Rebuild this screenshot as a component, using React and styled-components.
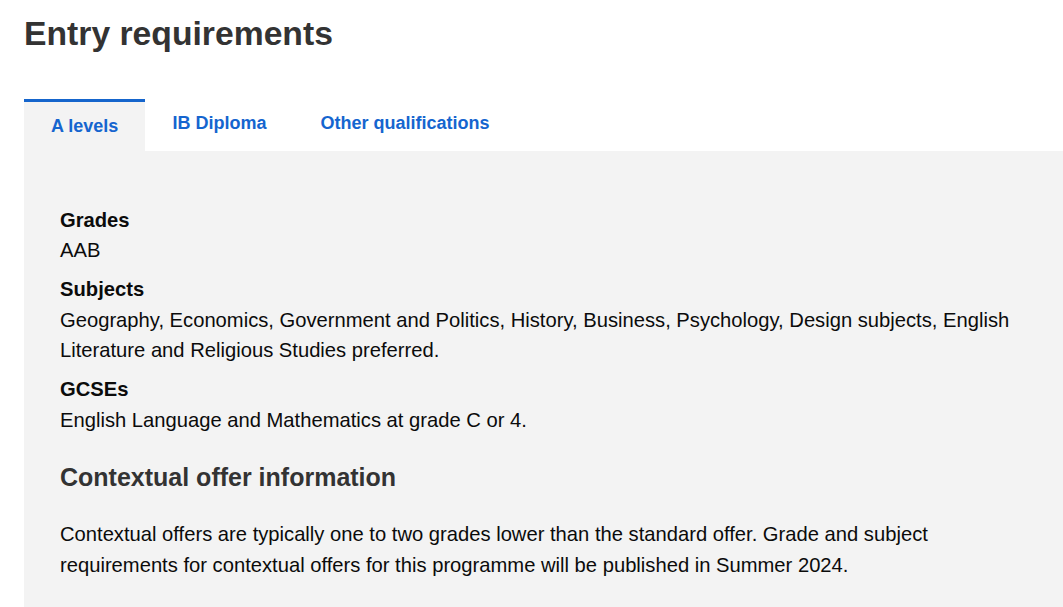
import React, { useState } from "react";
import styled, { createGlobalStyle } from "styled-components";

const GlobalStyle = createGlobalStyle`
  html, body { margin: 0; padding: 0; background: #ffffff; }
  body { font-family: "Liberation Sans", Arial, sans-serif; }
  * { box-sizing: border-box; }
`;

const Page = styled.main`
  padding: 0 0 0 24px;
  overflow: hidden;
`;

const Title = styled.h1`
  margin: 13px 0 0;
  font-size: 33.7px;
  line-height: 40.8px;
  font-weight: 700;
  color: #333333;
`;

const TabList = styled.ul`
  display: flex;
  list-style: none;
  margin: 45px 0 0;
  padding: 0;
`;

const Tab = styled.li`
  padding: ${(p) => (p.$active ? "12px 27px 13px" : "12px 27px 16px")};
  border-top: ${(p) => (p.$active ? "3px solid #1565cc" : "0")};
  background: ${(p) => (p.$active ? "#f3f3f3" : "transparent")};
`;

const TabLink = styled.a`
  display: block;
  font-size: 18px;
  line-height: 24px;
  font-weight: 700;
  color: #1565cf;
  text-decoration: none;
  cursor: pointer;
`;

const Panel = styled.section`
  background: #f3f3f3;
  padding: 54px 36px 40px;
  min-height: 460px;
`;

const Group = styled.div`
  margin-bottom: 8.5px;
`;

const Label = styled.h3`
  margin: 0;
  font-size: 20.2px;
  line-height: 30.5px;
  font-weight: 700;
  color: #0b0b0b;
`;

const Value = styled.p`
  margin: 0;
  font-size: 20.2px;
  line-height: 30.5px;
  color: #0b0b0b;
`;

const SubHeading = styled.h2`
  margin: 27px 0 27px;
  font-size: 25px;
  line-height: 30px;
  font-weight: 700;
  color: #333333;
`;

const Paragraph = styled.p`
  margin: 0;
  font-size: 20.2px;
  line-height: 30.5px;
  color: #0b0b0b;
  max-width: 967px;
`;

const tabs = ["A levels", "IB Diploma", "Other qualifications"];

const requirements = [
  { label: "Grades", value: "AAB" },
  {
    label: "Subjects",
    value:
      "Geography, Economics, Government and Politics, History, Business, Psychology, Design subjects, English Literature and Religious Studies preferred.",
  },
  { label: "GCSEs", value: "English Language and Mathematics at grade C or 4." },
];

export default function App() {
  const [active, setActive] = useState(0);
  return (
    <>
      <GlobalStyle />
      <Page>
        <Title>Entry requirements</Title>
        <TabList>
          {tabs.map((t, i) => (
            <Tab key={t} $active={i === active}>
              <TabLink onClick={() => setActive(i)}>{t}</TabLink>
            </Tab>
          ))}
        </TabList>
        <Panel>
          {requirements.map((r) => (
            <Group key={r.label}>
              <Label>{r.label}</Label>
              <Value>{r.value}</Value>
            </Group>
          ))}
          <SubHeading>Contextual offer information</SubHeading>
          <Paragraph>
            Contextual offers are typically one to two grades lower than the standard offer. Grade and subject
            requirements for contextual offers for this programme will be published in Summer 2024.
          </Paragraph>
        </Panel>
      </Page>
    </>
  );
}
